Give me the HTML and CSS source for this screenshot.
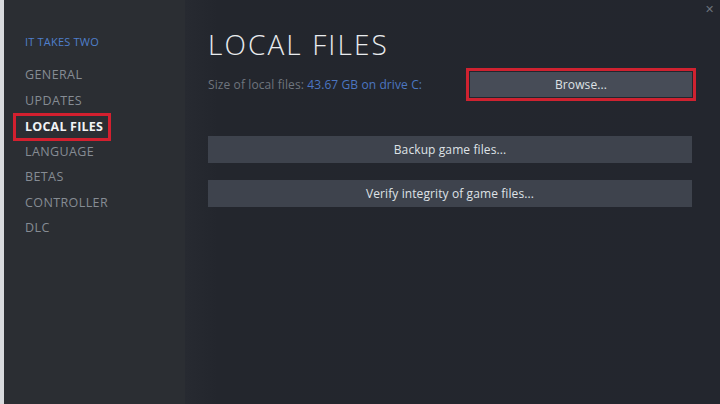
FILE: index.html
```html
<!DOCTYPE html>
<html>
<head>
<meta charset="utf-8">
<link rel="stylesheet" href="styles.css">
</head>
<body>
<div class="window">
  <div class="edge"></div>
  <nav class="sidebar">
    <div class="game">IT TAKES TWO</div>
    <ul class="nav">
      <li>GENERAL</li>
      <li>UPDATES</li>
      <li class="active"><span class="hl">LOCAL FILES</span></li>
      <li>LANGUAGE</li>
      <li>BETAS</li>
      <li>CONTROLLER</li>
      <li>DLC</li>
    </ul>
  </nav>
  <main class="main">
    <div class="close">&#x2715;</div>
    <h1 class="title">LOCAL FILES</h1>
    <div class="sizerow">
      <div class="size">Size of local files: <span class="val">43.67 GB on drive C:</span></div>
      <div class="browse-box"><div class="btn browse">Browse...</div></div>
    </div>
    <div class="btn wide backup">Backup game files...</div>
    <div class="btn wide">Verify integrity of game files...</div>
  </main>
</div>
</body>
</html>
```
FILE: styles.css
```css
html, body {
  margin: 0;
  padding: 0;
  width: 720px;
  height: 404px;
  overflow: hidden;
  background: #24272e;
  font-family: "Open Sans", "Liberation Sans", sans-serif;
}
.window {
  display: flex;
  height: 404px;
}
.edge {
  width: 4px;
  background: #d8dadd;
  flex: none;
}
.sidebar {
  width: 181px;
  flex: none;
  background: #2b2e33;
  padding-top: 34px;
  box-sizing: border-box;
}
.game {
  color: #4f7fcc;
  font-size: 11px;
  padding-left: 21px;
  height: 15px;
  line-height: 15px;
  letter-spacing: 0.2px;
}
.nav {
  list-style: none;
  margin: 13px 0 0 0;
  padding: 0;
}
.nav li {
  height: 25.5px;
  line-height: 25.5px;
  font-size: 12.5px;
  color: #868c94;
  padding-left: 21px;
  letter-spacing: 0.4px;
}
.nav li.active {
  padding-left: 9px;
}
.hl {
  display: inline-block;
  border: 3px solid #d3202f;
  padding: 1px 5px 1px 9px;
  line-height: 20px;
  color: #f2f3f5;
  font-weight: 700;
  font-size: 12.5px;
  letter-spacing: 0.2px;
}
.main {
  flex: 1;
  position: relative;
  padding: 25px 28px 0 23px;
  background: linear-gradient(90deg, #272a31 0%, #23262d 6%, #23262e 100%);
}
.close {
  position: absolute;
  right: 6px;
  top: 1px;
  color: #6c727b;
  font-size: 11px;
}
.title {
  margin: 0;
  font-weight: 300;
  font-size: 28px;
  color: #e9ebee;
  letter-spacing: 2.1px;
  line-height: 38px;
}
.sizerow {
  display: flex;
  align-items: center;
  justify-content: space-between;
  margin-top: 5px;
}
.size {
  font-size: 12px;
  color: #6f757e;
  letter-spacing: 0.1px;
}
.val {
  color: #4c76c2;
}
.browse-box {
  border: 3px solid #cf2230;
  padding: 1px;
  width: 222px;
  margin-right: -4px;
}
.btn {
  background: #3e434d;
  color: #dfe2e6;
  font-size: 12px;
  text-align: center;
  letter-spacing: 0.1px;
}
.browse {
  height: 25px;
  line-height: 25px;
  background: #474c57;
}
.wide {
  height: 27px;
  line-height: 27px;
}
.backup {
  margin-top: 35px;
  margin-bottom: 17px;
}
```
